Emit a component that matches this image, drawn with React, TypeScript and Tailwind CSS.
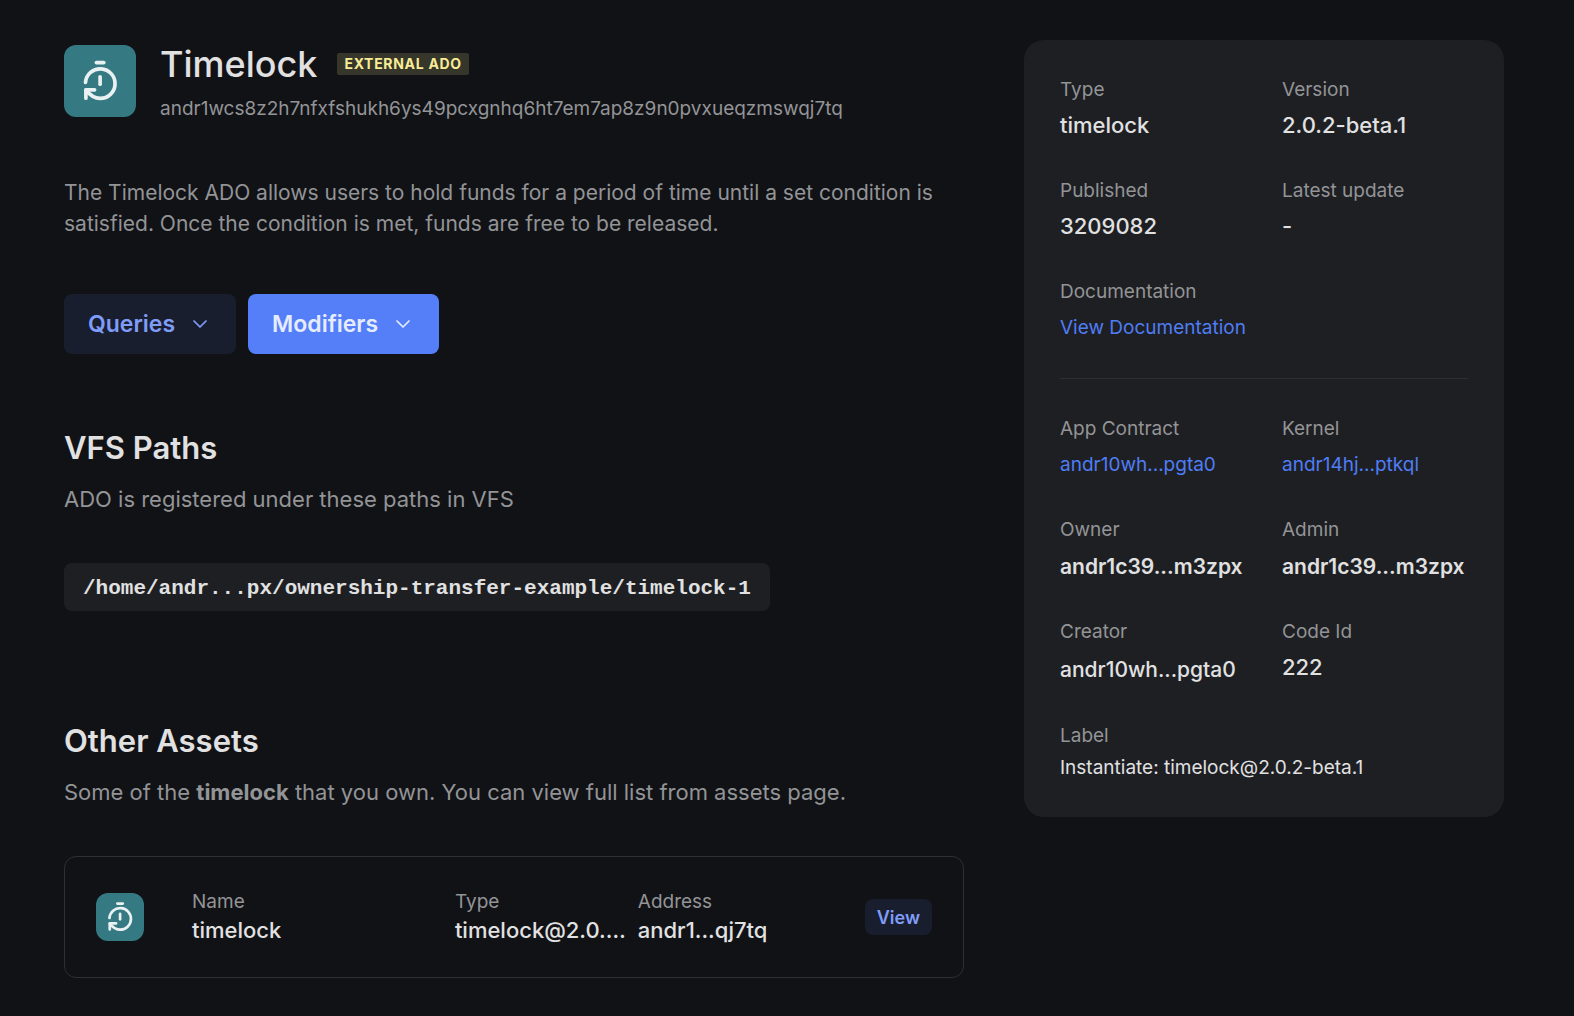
import type { ReactNode } from "react";
import { ChevronDown } from "lucide-react";

function TimelockIcon({ tile, glyph }: { tile: string; glyph: string }) {
  return (
    <span className={`flex shrink-0 items-center justify-center rounded-xl bg-[#357983] ${tile}`}>
      <svg
        viewBox="13 14 44 44"
        fill="none"
        stroke="#e9f1f2"
        strokeWidth="3.7"
        strokeLinecap="round"
        strokeLinejoin="round"
        className={glyph}
        aria-hidden="true"
      >
        <path d="M31.4 17.6h7.4" />
        <path d="M35.1 31.8v7.4" />
        <path d="M20.5 37.4A14.8 14.8 0 1 1 35.1 53.4C29.1 53.4 25.1 50.3 20.9 45" />
        <path d="M20.9 53.2v-8.4h8.7" />
      </svg>
    </span>
  );
}

function Field({ label, gap = "gap-2", children }: { label: string; gap?: string; children: ReactNode }) {
  return (
    <div className={`flex min-w-0 flex-col ${gap}`}>
      <dt className="text-[19px] leading-[27px] text-[#939496]">{label}</dt>
      <dd>{children}</dd>
    </div>
  );
}

function Value({ children }: { children: ReactNode }) {
  return <span className="block pb-0.5 text-[22px] font-medium leading-[28px]">{children}</span>;
}

function FieldLink({ children }: { children: ReactNode }) {
  return (
    <a href="#" className="block text-[19px] leading-[30px] text-[#4f7df5]">
      {children}
    </a>
  );
}

function SectionTitle({ title, children }: { title: string; children: ReactNode }) {
  return (
    <div className="flex flex-col gap-3">
      <h2 className="text-[31px] font-semibold leading-[48px]">{title}</h2>
      <p className="text-[22px] leading-[31px] text-[#939496]">{children}</p>
    </div>
  );
}

export default function App() {
  return (
    <div className="flex min-h-screen items-start gap-[60px] bg-[#111216] pt-10 pr-[70px] pb-9 pl-16 font-['Inter',sans-serif] text-[#e1e1e2]">
      <main className="min-w-0 flex-1">
        <header className="flex items-center gap-6">
          <TimelockIcon tile="size-[72px]" glyph="size-11" />
          <div className="min-w-0">
            <div className="flex items-center gap-5">
              <h1 className="text-[36px] font-medium leading-[48px]">Timelock</h1>
              <span className="rounded-xs bg-[#36362b] px-[7px] text-[14px] font-bold leading-[22px] tracking-wider text-[#f8ec96]">
                EXTERNAL ADO
              </span>
            </div>
            <p className="mt-2 text-[19px] leading-[26px] text-[#939496]">
              andr1wcs8z2h7nfxfshukh6ys49pcxgnhq6ht7em7ap8z9n0pvxueqzmswqj7tq
            </p>
          </div>
        </header>

        <p className="mt-[55px] text-[21px] leading-[31px] text-[#939496]">
          The Timelock ADO allows users to hold funds for a period of time until a set condition is satisfied. Once the
          condition is met, funds are free to be released.
        </p>

        <div className="mt-[55px] flex gap-3">
          <button type="button" className="flex h-[60px] items-center gap-[13px] rounded-lg bg-[#191e2f] px-6 text-[23px] font-semibold text-[#7f9df8]">
            Queries
            <ChevronDown className="size-6" strokeWidth={1.75} />
          </button>
          <button type="button" className="flex h-[60px] items-center gap-[13px] rounded-lg bg-[#547ff9] px-6 text-[23px] font-semibold text-[#e6ecfe]">
            Modifiers
            <ChevronDown className="size-6" strokeWidth={1.75} />
          </button>
        </div>

        <section className="mt-[70px] flex flex-col items-start gap-12">
          <SectionTitle title="VFS Paths">ADO is registered under these paths in VFS</SectionTitle>
          <code className="rounded-lg bg-[#1e1f23] px-[19px] pt-1 font-['Liberation_Mono',monospace] text-[21px] font-semibold leading-[44px]">
            /home/andr...px/ownership-transfer-example/timelock-1
          </code>
        </section>

        <section className="mt-[106px]">
          <SectionTitle title="Other Assets">
            Some of the <strong className="font-bold">timelock</strong> that you own. You can view full list from assets
            page.
          </SectionTitle>
          <div className="mt-12 flex items-center rounded-xl border border-[#2e2f33] p-[31px]">
            <TimelockIcon tile="size-12" glyph="size-8" />
            <dl className="ml-12 grid min-w-0 flex-1 grid-cols-[minmax(0,247fr)_minmax(0,167fr)_minmax(0,215fr)] gap-4 whitespace-nowrap">
              {[
                ["Name", "timelock"],
                ["Type", "timelock@2.0.…"],
                ["Address", "andr1...qj7tq"],
              ].map(([label, value]) => (
                <div key={label}>
                  <dt className="text-[19px] leading-[28px] text-[#939496]">{label}</dt>
                  <dd>
                    <Value>{value}</Value>
                  </dd>
                </div>
              ))}
            </dl>
            <button type="button" className="ml-3 h-9 rounded-lg bg-[#191e2f] px-3 text-[18px] font-semibold text-[#7f9df8]">
              View
            </button>
          </div>
        </section>
      </main>

      <aside className="w-[480px] shrink-0 rounded-[20px] bg-[#1e1f23] p-9">
        <dl className="grid grid-cols-2 gap-9">
          <Field label="Type">
            <Value>timelock</Value>
          </Field>
          <Field label="Version">
            <Value>2.0.2-beta.1</Value>
          </Field>
          <Field label="Published">
            <Value>3209082</Value>
          </Field>
          <Field label="Latest update">
            <Value>-</Value>
          </Field>
          <Field label="Documentation">
            <FieldLink>View Documentation</FieldLink>
          </Field>
        </dl>
        <hr className="mt-[35px] mb-9 border-[#2e2f33]" />
        <dl className="grid grid-cols-2 gap-9">
          <Field label="App Contract">
            <FieldLink>andr10wh...pgta0</FieldLink>
          </Field>
          <Field label="Kernel">
            <FieldLink>andr14hj...ptkql</FieldLink>
          </Field>
          <Field label="Owner">
            <span className="block text-[21px] font-semibold leading-[31px]">andr1c39...m3zpx</span>
          </Field>
          <Field label="Admin">
            <span className="block text-[21px] font-semibold leading-[31px]">andr1c39...m3zpx</span>
          </Field>
          <Field label="Creator">
            <span className="block text-[21px] font-medium leading-[33px]">andr10wh...pgta0</span>
          </Field>
          <Field label="Code Id">
            <Value>222</Value>
          </Field>
          <div className="col-span-2">
            <Field label="Label" gap="gap-1.5">
              <span className="block text-[19px] leading-[26px]">Instantiate: timelock@2.0.2-beta.1</span>
            </Field>
          </div>
        </dl>
      </aside>
    </div>
  );
}
